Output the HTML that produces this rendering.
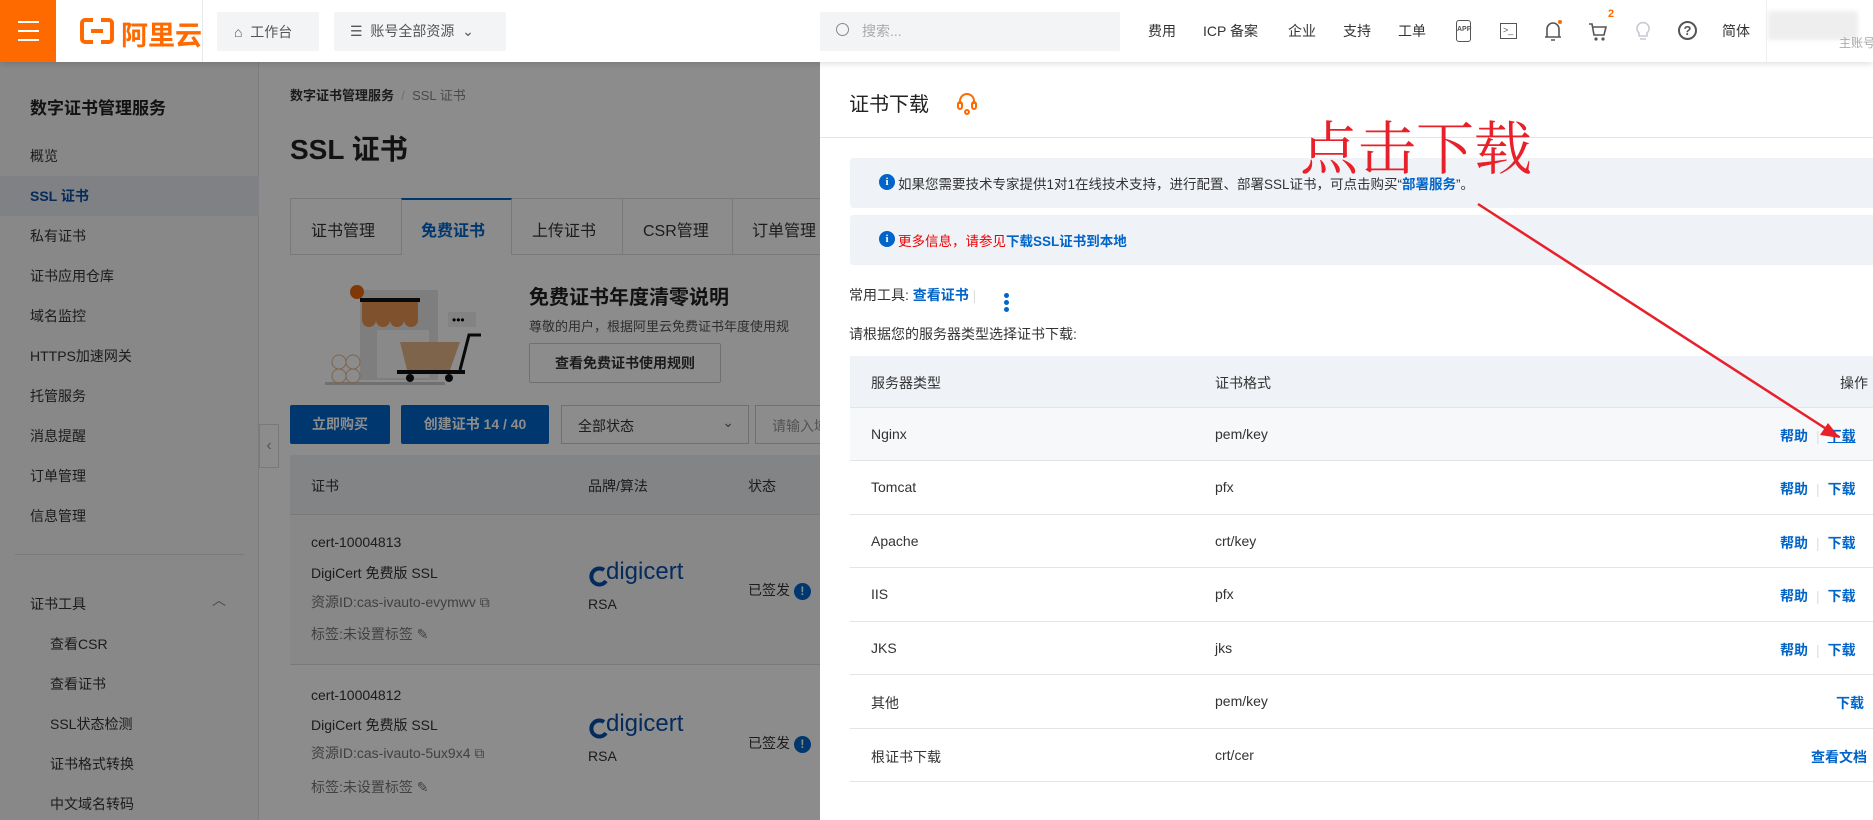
<!DOCTYPE html>
<html><head><meta charset="utf-8">
<style>
*{box-sizing:border-box;margin:0;padding:0}
body{width:1873px;height:820px;position:relative;overflow:hidden;background:#fff;font-family:"Liberation Sans","Noto Sans CJK SC",sans-serif;color:#333;font-size:14px}
.a{position:absolute;white-space:nowrap}
.top{position:absolute;left:0;top:0;width:1873px;height:62px;background:#fff;box-shadow:0 2px 6px rgba(0,0,0,.12);z-index:5}
.side{position:absolute;left:0;top:62px;width:259px;height:758px;background:#f7f8fa;border-right:1px solid #e3e4e6}
.blue{color:#0064c8}
.ov{position:absolute;left:0;top:62px;width:820px;height:758px;background:rgba(0,0,0,.45);z-index:3}
.drawer{position:absolute;left:820px;top:62px;width:1053px;height:758px;background:#fff;z-index:4}
.row{position:absolute;left:30px;width:1030px;height:54px;border-bottom:1px solid #e3e4e6}
.row span{position:absolute;top:18px;font-size:14px}
.sep{color:#ddd;font-weight:normal;position:static!important;margin:0 8px}
</style></head><body>

<div class="top">
  <div class="a" style="left:0;top:0;width:56px;height:62px;background:#ff6a00"></div>
  <div class="a" style="left:18px;top:21px;width:21px;height:2px;background:#fff;box-shadow:0 9px 0 #fff,0 18px 0 #fff"></div>
  <div class="a" style="left:80px;top:18px;width:34px;height:26px;border:4px solid #ff6a00;border-radius:5px"></div>
  <div class="a" style="left:93px;top:14px;width:8px;height:34px;background:#fff"></div>
  <div class="a" style="left:91px;top:29px;width:12px;height:4px;background:#ff6a00"></div>
  <div class="a" style="left:121px;top:14px;font-size:27px;font-weight:bold;color:#ff6a00">阿里云</div>
  <div class="a" style="left:202px;top:0;width:1px;height:62px;background:#e8e8e8"></div>
  <div class="a" style="left:217px;top:12px;width:102px;height:39px;background:#f3f4f6;border-radius:2px"></div>
  <div class="a" style="left:234px;top:22px;font-size:14px;color:#555">⌂&nbsp;&nbsp;工作台</div>
  <div class="a" style="left:334px;top:12px;width:172px;height:39px;background:#f3f4f6;border-radius:2px"></div>
  <div class="a" style="left:350px;top:21px;font-size:14px;color:#555">☰&nbsp;&nbsp;账号全部资源&nbsp;&nbsp;⌄</div>
  <div class="a" style="left:820px;top:12px;width:300px;height:39px;background:#f3f4f6;border-radius:2px"></div>
  <div class="a" style="left:836px;top:23px;width:13px;height:13px;border:1.5px solid #888;border-radius:50%"></div>
  <div class="a" style="left:862px;top:21px;font-size:14px;color:#aaa">搜索...</div>
  <div class="a" style="left:1148px;top:21px;font-size:14px;color:#333">费用</div>
  <div class="a" style="left:1203px;top:21px;font-size:14px;color:#333">ICP 备案</div>
  <div class="a" style="left:1288px;top:21px;font-size:14px;color:#333">企业</div>
  <div class="a" style="left:1343px;top:21px;font-size:14px;color:#333">支持</div>
  <div class="a" style="left:1398px;top:21px;font-size:14px;color:#333">工单</div>
  <div class="a" style="left:1456px;top:20px;width:15px;height:22px;border:1.5px solid #555;border-radius:3px;font-size:7px;font-weight:bold;text-align:center;line-height:18px;color:#555">APP</div>
  <div class="a" style="left:1500px;top:23px;width:17px;height:16px;border:1.5px solid #555;font-size:9px;line-height:12px;padding-left:2px;color:#555">&gt;_</div>
  <svg class="a" style="left:1543px;top:19px" width="20" height="24"><path d="M4 18V10a6 6 0 0 1 12 0v8zM2 18h16M8 21h4" fill="none" stroke="#555" stroke-width="1.6"/><circle cx="17" cy="3" r="2" fill="#ff6a00"/></svg>
  <svg class="a" style="left:1588px;top:22px" width="22" height="20"><path d="M1 2h3l2 11h10l2-8H5" fill="none" stroke="#555" stroke-width="1.6"/><circle cx="8" cy="17" r="1.6" fill="#555"/><circle cx="15" cy="17" r="1.6" fill="#555"/></svg>
  <div class="a" style="left:1608px;top:8px;font-size:11px;font-weight:bold;color:#ff6a00">2</div>
  <svg class="a" style="left:1635px;top:19px" width="16" height="24"><path d="M4 14a6 6 0 1 1 8 0v3H4zM5 20h6" fill="none" stroke="#c6cbd3" stroke-width="1.6"/></svg>
  <div class="a" style="left:1678px;top:21px;width:19px;height:19px;border:2px solid #555;border-radius:50%;font-size:13px;font-weight:bold;text-align:center;line-height:15px;color:#555">?</div>
  <div class="a" style="left:1722px;top:21px;font-size:14px;color:#333">简体</div>
  <div class="a" style="left:1766px;top:0;width:1px;height:62px;background:#eee"></div>
  <div class="a" style="left:1768px;top:11px;width:90px;height:29px;background:#eee;filter:blur(2px)"></div>
  <div class="a" style="left:1839px;top:34px;font-size:12px;color:#aaa">主账号</div>
</div>

<div class="side">
  <div class="a" style="left:30px;top:32px;font-size:17px;font-weight:bold;color:#222">数字证书管理服务</div>
  <div class="a" style="left:30px;top:84px">概览</div>
  <div class="a" style="left:0;top:114px;width:259px;height:40px;background:#e9ecf1"></div>
  <div class="a" style="left:30px;top:124px;font-weight:bold;color:#0a4ea8">SSL 证书</div>
  <div class="a" style="left:30px;top:164px">私有证书</div>
  <div class="a" style="left:30px;top:204px">证书应用仓库</div>
  <div class="a" style="left:30px;top:244px">域名监控</div>
  <div class="a" style="left:30px;top:284px">HTTPS加速网关</div>
  <div class="a" style="left:30px;top:324px">托管服务</div>
  <div class="a" style="left:30px;top:364px">消息提醒</div>
  <div class="a" style="left:30px;top:404px">订单管理</div>
  <div class="a" style="left:30px;top:444px">信息管理</div>
  <div class="a" style="left:15px;top:492px;width:229px;height:1px;background:#ddd"></div>
  <div class="a" style="left:30px;top:532px">证书工具</div>
  <div class="a" style="left:212px;top:528px;color:#888">︿</div>
  <div class="a" style="left:50px;top:572px">查看CSR</div>
  <div class="a" style="left:50px;top:612px">查看证书</div>
  <div class="a" style="left:50px;top:652px">SSL状态检测</div>
  <div class="a" style="left:50px;top:692px">证书格式转换</div>
  <div class="a" style="left:50px;top:732px">中文域名转码</div>
</div>
<div class="a" style="left:259px;top:424px;width:20px;height:44px;background:#fff;border:1px solid #ddd;font-size:16px;color:#999;text-align:center;line-height:42px">‹</div>

<div class="a" style="left:290px;top:85px;font-size:13px;font-weight:bold;color:#333">数字证书管理服务 <span style="color:#ccc;font-weight:normal">&nbsp;/&nbsp;</span> <span style="color:#888;font-weight:normal">SSL 证书</span></div>
<div class="a" style="left:290px;top:128px;font-size:28px;font-weight:bold;color:#222">SSL 证书</div>
<div class="a" style="left:290px;top:198px;width:540px;height:57px;border:1px solid #ddd"></div>
<div class="a" style="left:401px;top:198px;width:111px;height:57px;border-top:2px solid #0064c8;border-left:1px solid #ddd;border-right:1px solid #ddd;background:#fff"></div>
<div class="a" style="left:622px;top:198px;width:1px;height:57px;background:#ddd"></div>
<div class="a" style="left:732px;top:198px;width:1px;height:57px;background:#ddd"></div>
<div class="a" style="left:311px;top:217px;font-size:16px">证书管理</div>
<div class="a" style="left:421px;top:217px;font-size:16px;font-weight:bold;color:#0064c8">免费证书</div>
<div class="a" style="left:532px;top:217px;font-size:16px">上传证书</div>
<div class="a" style="left:643px;top:217px;font-size:16px">CSR管理</div>
<div class="a" style="left:752px;top:217px;font-size:16px">订单管理</div>
<svg class="a" style="left:315px;top:280px" width="210" height="105">
 <rect x="45" y="10" width="78" height="90" fill="#e6e6e6"/><rect x="62" y="50" width="52" height="48" fill="#fafafa"/>
 <rect x="45" y="18" width="60" height="4" fill="#111"/>
 <path d="M47 22h14v18a7 7 0 0 1-14 0zM61 22h14v18a7 7 0 0 1-14 0zM75 22h14v18a7 7 0 0 1-14 0zM89 22h14v18a7 7 0 0 1-14 0z" fill="#e89450"/>
 <circle cx="42" cy="12" r="7" fill="#e8680e"/>
 <path d="M85 62h60l-10 28H92z" fill="#e8b78a"/><path d="M145 90l9-35h12" fill="none" stroke="#111" stroke-width="3"/>
 <rect x="82" y="90" width="68" height="4" fill="#111"/><circle cx="95" cy="98" r="4" fill="#111"/><circle cx="134" cy="98" r="4" fill="#111"/>
 <rect x="10" y="102" width="120" height="3" fill="#ccc"/>
 <g fill="none" stroke="#e8b78a"><circle cx="24" cy="82" r="7"/><circle cx="38" cy="82" r="7"/><circle cx="24" cy="96" r="7"/><circle cx="38" cy="96" r="7"/></g>
 <rect x="133" y="32" width="28" height="15" fill="#eee"/><text x="137" y="44" font-size="12">•••</text>
</svg>
<div class="a" style="left:529px;top:281px;font-size:20px;font-weight:bold;color:#222">免费证书年度清零说明</div>
<div class="a" style="left:529px;top:316px;font-size:13px;color:#555">尊敬的用户，根据阿里云免费证书年度使用规</div>
<div class="a" style="left:529px;top:343px;width:192px;height:40px;border:1px solid #ccc;border-radius:2px;font-weight:bold;text-align:center;line-height:38px">查看免费证书使用规则</div>
<div class="a" style="left:290px;top:405px;width:100px;height:39px;background:#0064c8;color:#fff;font-weight:bold;text-align:center;line-height:39px;border-radius:2px">立即购买</div>
<div class="a" style="left:401px;top:405px;width:148px;height:39px;background:#0064c8;color:#fff;font-weight:bold;text-align:center;line-height:39px;border-radius:2px">创建证书 14 / 40</div>
<div class="a" style="left:561px;top:405px;width:188px;height:39px;border:1px solid #ccc;padding:10px 16px">全部状态<span style="position:absolute;right:14px;top:8px;color:#666">⌄</span></div>
<div class="a" style="left:755px;top:405px;width:100px;height:39px;border:1px solid #ccc;padding:10px 16px;color:#999">请输入域名</div>
<div class="a" style="left:290px;top:455px;width:530px;height:60px;background:#eff1f5;border-bottom:1px solid #ddd"></div>
<div class="a" style="left:311px;top:476px">证书</div>
<div class="a" style="left:588px;top:476px">品牌/算法</div>
<div class="a" style="left:748px;top:476px">状态</div>
<div class="a" style="left:290px;top:515px;width:530px;height:150px;background:#f7f8fa;border-bottom:1px solid #ddd"></div>
<div class="a" style="left:311px;top:534px">cert-10004813</div>
<div class="a" style="left:311px;top:563px">DigiCert 免费版 SSL</div>
<div class="a" style="left:311px;top:592px;color:#777">资源ID:cas-ivauto-evymwv ⧉</div>
<div class="a" style="left:311px;top:624px;color:#777">标签:未设置标签 ✎</div>
<svg class="a" style="left:588px;top:565px" width="22" height="22"><path d="M16 5a8 8 0 1 0 2 11" fill="none" stroke="#0a4ea8" stroke-width="4"/></svg>
<div class="a" style="left:606px;top:558px;font-size:24px;color:#0a4ea8">digicert</div>
<div class="a" style="left:588px;top:596px">RSA</div>
<div class="a" style="left:748px;top:580px">已签发 <span style="display:inline-block;width:17px;height:17px;border-radius:50%;background:#0064c8;color:#fff;text-align:center;font-size:12px;font-weight:bold;line-height:17px">!</span></div>
<div class="a" style="left:311px;top:687px">cert-10004812</div>
<div class="a" style="left:311px;top:715px">DigiCert 免费版 SSL</div>
<div class="a" style="left:311px;top:743px;color:#777">资源ID:cas-ivauto-5ux9x4 ⧉</div>
<div class="a" style="left:311px;top:777px;color:#777">标签:未设置标签 ✎</div>
<svg class="a" style="left:588px;top:717px" width="22" height="22"><path d="M16 5a8 8 0 1 0 2 11" fill="none" stroke="#0a4ea8" stroke-width="4"/></svg>
<div class="a" style="left:606px;top:710px;font-size:24px;color:#0a4ea8">digicert</div>
<div class="a" style="left:588px;top:748px">RSA</div>
<div class="a" style="left:748px;top:733px">已签发 <span style="display:inline-block;width:17px;height:17px;border-radius:50%;background:#0064c8;color:#fff;text-align:center;font-size:12px;font-weight:bold;line-height:17px">!</span></div>

<div class="ov"></div>

<div class="drawer">
  <div class="a" style="left:29px;top:26px;font-size:20px;color:#222">证书下载</div>
  <svg class="a" style="left:136px;top:29px" width="22" height="24"><path d="M4 13v-3a7 7 0 0 1 14 0v3" fill="none" stroke="#ff6a00" stroke-width="2"/><rect x="2" y="11" width="4" height="7" rx="2" fill="none" stroke="#ff6a00" stroke-width="2"/><rect x="16" y="11" width="4" height="7" rx="2" fill="none" stroke="#ff6a00" stroke-width="2"/><circle cx="11" cy="21" r="2" fill="none" stroke="#ff6a00" stroke-width="2"/></svg>
  <div class="a" style="left:0;top:75px;width:1053px;height:1px;background:#e5e5e5"></div>
  <div class="a" style="left:30px;top:96px;width:1030px;height:50px;background:#eff2f7;border-radius:3px"></div>
  <div class="a" style="left:59px;top:112px;width:16px;height:16px;border-radius:50%;background:#0064c8;color:#fff;font-size:11px;font-weight:bold;text-align:center;line-height:16px;font-family:'Liberation Serif',serif">i</div>
  <div class="a" style="left:78px;top:111px;font-size:13.5px;color:#333">如果您需要技术专家提供1对1在线技术支持，进行配置、部署SSL证书，可点击购买“<span class="blue" style="font-weight:bold">部署服务</span>”。</div>
  <div class="a" style="left:30px;top:153px;width:1030px;height:50px;background:#eff2f7;border-radius:3px"></div>
  <div class="a" style="left:59px;top:169px;width:16px;height:16px;border-radius:50%;background:#0064c8;color:#fff;font-size:11px;font-weight:bold;text-align:center;line-height:16px;font-family:'Liberation Serif',serif">i</div>
  <div class="a" style="left:78px;top:168px;font-size:13.5px;color:#e00">更多信息，请参见<span class="blue" style="font-weight:bold">下载SSL证书到本地</span></div>
  <div class="a" style="left:29px;top:223px">常用工具: <span class="blue" style="font-weight:bold">查看证书</span> <span style="color:#ddd">|</span></div>
  <div class="a" style="left:184px;top:231px;width:5px;height:5px;border-radius:50%;background:#0064c8;box-shadow:0 7px 0 #0064c8,0 14px 0 #0064c8"></div>
  <div class="a" style="left:29px;top:262px">请根据您的服务器类型选择证书下载:</div>
  <div class="a" style="left:30px;top:294px;width:1030px;height:52px;background:#eff2f7;border-bottom:1px solid #e3e4e6"></div>
  <div class="a" style="left:51px;top:311px">服务器类型</div>
  <div class="a" style="left:395px;top:311px">证书格式</div>
  <div class="a" style="left:1020px;top:311px">操作</div>
  <div class="row" style="top:346px;height:53px;background:#f7f8fa"><span style="left:21px">Nginx</span><span style="left:365px">pem/key</span><span class="blue" style="left:930px;font-weight:bold">帮助<span class="sep">|</span><u>下载</u></span></div>
  <div class="row" style="top:399px"><span style="left:21px">Tomcat</span><span style="left:365px">pfx</span><span class="blue" style="left:930px;font-weight:bold">帮助<span class="sep">|</span>下载</span></div>
  <div class="row" style="top:453px;height:53px"><span style="left:21px">Apache</span><span style="left:365px">crt/key</span><span class="blue" style="left:930px;font-weight:bold">帮助<span class="sep">|</span>下载</span></div>
  <div class="row" style="top:506px"><span style="left:21px">IIS</span><span style="left:365px">pfx</span><span class="blue" style="left:930px;font-weight:bold">帮助<span class="sep">|</span>下载</span></div>
  <div class="row" style="top:560px;height:53px"><span style="left:21px">JKS</span><span style="left:365px">jks</span><span class="blue" style="left:930px;font-weight:bold">帮助<span class="sep">|</span>下载</span></div>
  <div class="row" style="top:613px"><span style="left:21px">其他</span><span style="left:365px">pem/key</span><span class="blue" style="left:986px;font-weight:bold">下载</span></div>
  <div class="row" style="top:667px;height:53px"><span style="left:21px">根证书下载</span><span style="left:365px">crt/cer</span><span class="blue" style="left:961px;font-weight:bold">查看文档</span></div>
</div>

<div class="a" style="left:1300px;top:102px;font-size:58px;color:#e8202a;font-family:'Noto Serif CJK SC','Liberation Serif',serif;z-index:6">点击下载</div>
<svg class="a" style="left:0;top:0;z-index:6" width="1873" height="820"><line x1="1478" y1="204" x2="1828" y2="430" stroke="#e8202a" stroke-width="2.5"/><path d="M1840 438l-20-3 8-12z" fill="#e8202a"/></svg>
</body></html>
